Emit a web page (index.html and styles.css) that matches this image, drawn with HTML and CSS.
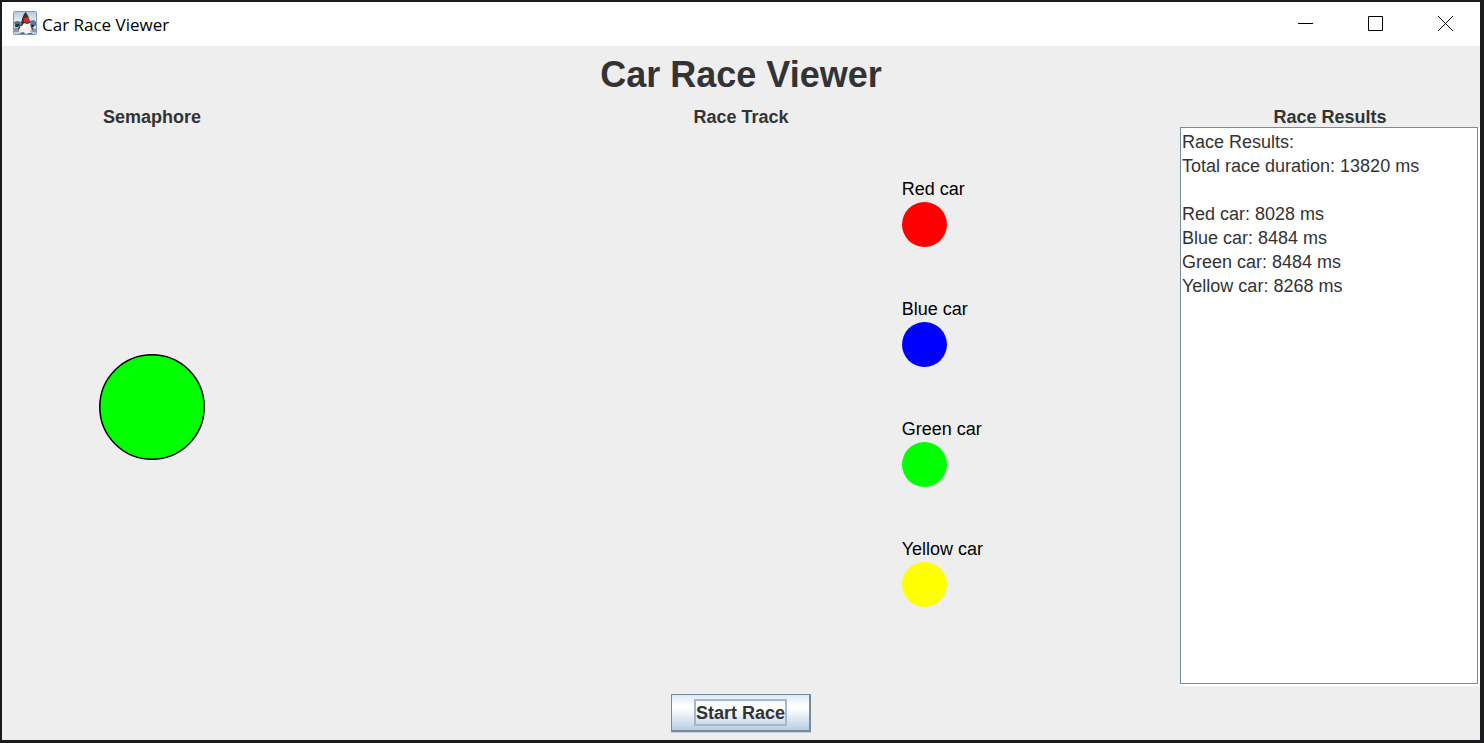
FILE: index.html
```
<!DOCTYPE html>
<html lang="en">
<head>
<meta charset="utf-8">
<title>Car Race Viewer</title>
<link rel="stylesheet" href="styles.css">
</head>
<body>
<div class="window">
  <header class="titlebar">
    <svg class="app-icon" viewBox="0 0 24 24" aria-hidden="true">
      <defs>
        <linearGradient id="sky" x1="0" y1="0" x2="0" y2="1">
          <stop offset="0" stop-color="#b4c8db"/>
          <stop offset="0.5" stop-color="#edf2f7"/>
          <stop offset="1" stop-color="#b9c9d8"/>
        </linearGradient>
      </defs>
      <rect x="0.5" y="0.5" width="23" height="23" rx="1" fill="url(#sky)" stroke="#7d9ab8"/>
      <path d="M1 11l3-1 5 1-1 4-6 1z" fill="#4a6f91"/>
      <path d="M16 10l5-1 2 2v4l-5 0z" fill="#587c9b"/>
      <path d="M3 13h4l-2 3H2zM18 13l3 1v2h-3z" fill="#27353f"/>
      <path d="M1 17l6-1v5H1zM18 17l5 1v3h-5z" fill="#8797a4"/>
      <path d="M8 12c3-2 7-1 9 0 2 4 3 8 1 10-2 1-3 0-5 0s-4 1-6 0c-2-2-1-7 1-10z" fill="#f6f4ef"/>
      <path d="M17 12c3 4 3 8 1 10l-1-1c1-3 1-6 0-9z" fill="#b9b8b4"/>
      <path d="M12.500 1c2 2 4 6 4.500 11l-3 1-3-1-2 3-1 0c0-6 2-11 4.500-14z" fill="#303236"/>
      <path d="M8 14l-2 5-1-1 2-5zM17.500 13l3 5-1 1-2-4z" fill="#3a3c3f"/>
      <path d="M7 22l3-1 2 1-1 1H7zM15 22h4v1h-4z" fill="#64696d"/>
      <circle cx="13.5" cy="9" r="2.8" fill="#e52424"/>
    </svg>
    <span class="caption">Car Race Viewer</span>
    <div class="controls">
      <button class="control" aria-label="Minimize"><svg viewBox="0 0 15 15"><path d="M0 7.5h15"/></svg></button>
      <button class="control" aria-label="Maximize"><svg viewBox="0 0 15 15"><path d="M.5.5h14v14H.5z"/></svg></button>
      <button class="control" aria-label="Close"><svg viewBox="0 0 15 15"><path d="M0 0l15 15M15 0L0 15"/></svg></button>
    </div>
  </header>
  <h1 class="title">Car Race Viewer</h1>
  <main class="panels">
    <section class="panel">
      <h2 class="heading">Semaphore</h2>
      <div class="semaphore">
        <svg class="lamp" viewBox="0 0 106 106" role="img" aria-label="Green light"><circle cx="53" cy="53" r="52.2"/></svg>
      </div>
    </section>
    <section class="panel">
      <h2 class="heading">Race Track</h2>
      <div class="track">
        <div class="car"><span>Red car</span><i class="dot red"></i></div>
        <div class="car"><span>Blue car</span><i class="dot blue"></i></div>
        <div class="car"><span>Green car</span><i class="dot green"></i></div>
        <div class="car"><span>Yellow car</span><i class="dot yellow"></i></div>
      </div>
    </section>
    <section class="panel">
      <h2 class="heading" id="results-label">Race Results</h2>
      <div class="results-frame">
        <textarea class="results" aria-labelledby="results-label" readonly spellcheck="false">Race Results:
Total race duration: 13820 ms

Red car: 8028 ms
Blue car: 8484 ms
Green car: 8484 ms
Yellow car: 8268 ms</textarea>
      </div>
    </section>
  </main>
  <footer class="actions">
    <button class="start"><span class="start-label">Start Race</span></button>
  </footer>
</div>
</body>
</html>
```
FILE: styles.css
```
* {
  box-sizing: border-box;
}

body {
  margin: 0;
  height: 100vh;
  padding: 2px 4px 3px 2px;
  background: #1b1a1d;
  font-family: "Liberation Sans", Arial, sans-serif;
  font-size: 18px;
  color: #333;
}

.window {
  display: flex;
  flex-direction: column;
  height: 100%;
  background: #eee;
}

.titlebar {
  display: flex;
  align-items: center;
  height: 44px;
  padding-left: 11px;
  background: #fff;
  color: #000;
}

.app-icon {
  width: 24px;
  height: 24px;
  margin-right: 5px;
  margin-bottom: 2px;
}

.caption {
  padding-top: 2px;
  font: 17px/24px "Open Sans", "Noto Sans", sans-serif;
}

.controls {
  display: flex;
  height: 100%;
  margin-left: auto;
}

.control {
  width: 70px;
  padding: 0 0 2px;
  border: 0;
  background: none;
}

.control svg {
  display: block;
  width: 15px;
  height: 15px;
  margin: auto;
  fill: none;
  stroke: #000;
}

.title {
  margin: 0;
  padding-top: 8px;
  font-size: 36px;
  line-height: 42px;
  text-align: center;
}

.panels {
  display: grid;
  grid-template-columns: 300px 1fr 300px;
  flex: 1;
  min-height: 0;
  padding-top: 11px;
}

.panel {
  display: flex;
  flex-direction: column;
  min-height: 0;
}

.heading {
  margin: 0;
  font-size: 18px;
  line-height: 20px;
  text-align: center;
}

.semaphore {
  display: flex;
  flex: 1;
  align-items: center;
  justify-content: center;
}

.lamp {
  width: 106px;
  height: 106px;
  fill: #0f0;
  stroke: #000;
  stroke-width: 1.5;
}

.track {
  display: flex;
  flex-direction: column;
  gap: 52px;
  padding: 52px 0 0 68.3%;
  color: #000;
}

.car {
  display: flex;
  flex-direction: column;
  gap: 2px;
  line-height: 21px;
}

.dot {
  width: 45px;
  height: 45px;
  border-radius: 50%;
}

.red {
  background: #f00;
}

.blue {
  background: #00f;
}

.green {
  background: #0f0;
}

.yellow {
  background: #ff0;
}

.results-frame {
  display: flex;
  flex: 1;
  padding: 0 2px 2px 0;
  background: #fff;
}

.results {
  flex: 1;
  min-width: 0;
  padding: 2px 1px;
  border: 1px solid #7a8a99;
  border-radius: 0;
  outline: 0;
  resize: none;
  background: #fff;
  color: #333;
  font: 18px/24px "Liberation Sans", Arial, sans-serif;
}

.actions {
  display: flex;
  justify-content: center;
  padding: 8px 0;
}

.start {
  padding: 4px 22px;
  border: 1px solid #7a8a99;
  border-width: 1px 2px 2px 1px;
  border-radius: 0;
  box-shadow: 0 1px #c4d6e8;
  background: linear-gradient(#dde8f3, #fff 30%, #fff 38%, #b8cfe5);
  color: #333;
  font: bold 18px/21px "Liberation Sans", Arial, sans-serif;
}

.start-label {
  display: block;
  padding: 2px 0 0;
  border: 2px solid #a3b8cc;
}
```
